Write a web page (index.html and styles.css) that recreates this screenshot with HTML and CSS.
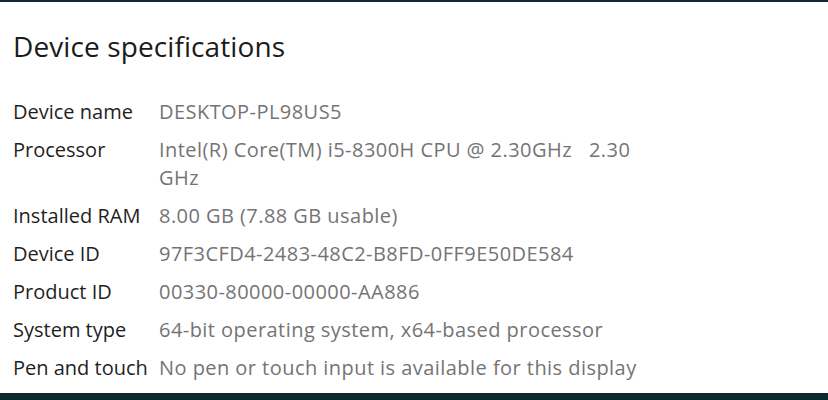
FILE: index.html
```html
<!DOCTYPE html>
<html lang="en">
<head>
<meta charset="utf-8">
<title>Device specifications</title>
<link rel="stylesheet" href="styles.css">
</head>
<body>
<div class="page">
  <div class="topbar"></div>
  <main class="content">
    <h1 class="title">Device specifications</h1>
    <dl class="specs">
      <dt>Device name</dt><dd>DESKTOP-PL98US5</dd>
      <dt>Processor</dt><dd>Intel(R) Core(TM) i5-8300H CPU @ 2.30GHz&nbsp;&nbsp; 2.30 GHz</dd>
      <dt>Installed RAM</dt><dd>8.00 GB (7.88 GB usable)</dd>
      <dt>Device ID</dt><dd>97F3CFD4-2483-48C2-B8FD-0FF9E50DE584</dd>
      <dt>Product ID</dt><dd>00330-80000-00000-AA886</dd>
      <dt>System type</dt><dd>64-bit operating system, x64-based processor</dd>
      <dt>Pen and touch</dt><dd>No pen or touch input is available for this display</dd>
    </dl>
  </main>
  <div class="bottombar"></div>
</div>
</body>
</html>
```

FILE: styles.css
```css
html, body {
  margin: 0;
  padding: 0;
  background: #ffffff;
}
.page {
  width: 828px;
  height: 400px;
  display: flex;
  flex-direction: column;
  font-family: "Open Sans", "Noto Sans", sans-serif;
  overflow: hidden;
}
.topbar {
  height: 2px;
  background: #0f2a2e;
  flex: none;
}
.content {
  flex: 1;
  padding: 26px 0 0 13px;
}
.title {
  margin: 0;
  font-size: 28px;
  line-height: 36px;
  font-weight: 400;
  letter-spacing: 0.1px;
  color: #1b1b1b;
}
.specs {
  margin: 34px 0 0 0;
  display: grid;
  grid-template-columns: 146px 500px;
  row-gap: 10px;
  font-size: 20px;
  line-height: 28px;
}
.specs dt {
  color: #1f1f1f;
  letter-spacing: 0;
}
.specs dd {
  margin: 0;
  color: #747474;
  letter-spacing: 0.45px;
}
.bottombar {
  height: 7px;
  background: #0a2a30;
  flex: none;
}
```
